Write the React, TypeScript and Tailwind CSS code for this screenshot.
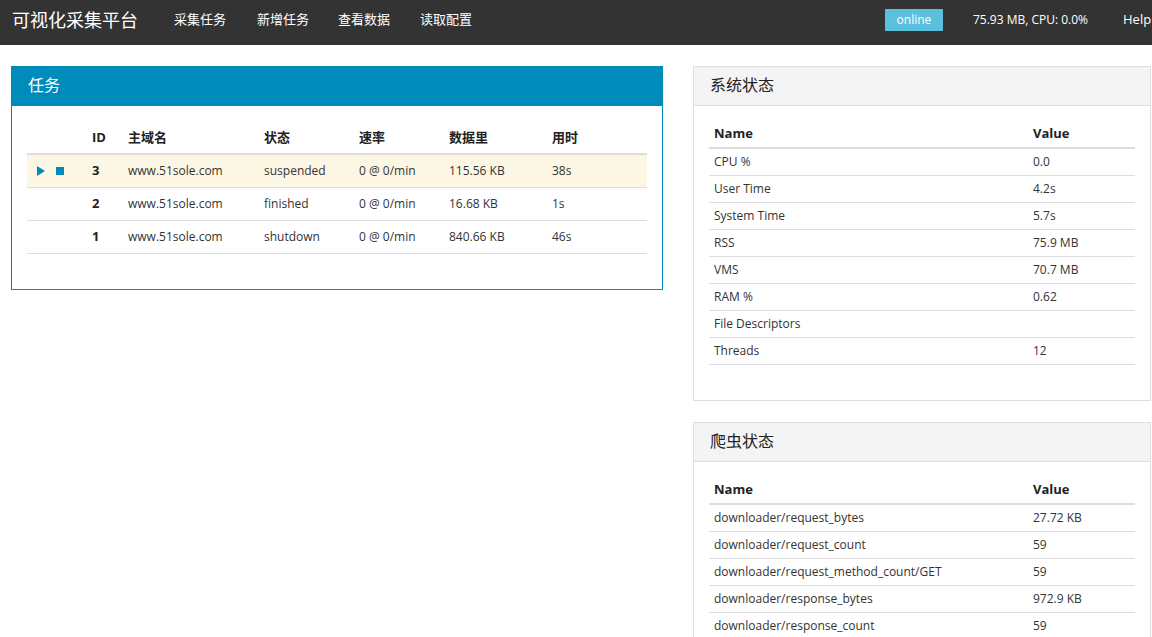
const FONT = "font-['Open_Sans','Noto_Sans_CJK_SC',sans-serif]";

const NAV = ["采集任务", "新增任务", "查看数据", "读取配置"];

const TASKS = [
  { id: 3, domain: "www.51sole.com", status: "suspended", speed: "0 @ 0/min", size: "115.56 KB", time: "38s", active: true },
  { id: 2, domain: "www.51sole.com", status: "finished", speed: "0 @ 0/min", size: "16.68 KB", time: "1s", active: false },
  { id: 1, domain: "www.51sole.com", status: "shutdown", speed: "0 @ 0/min", size: "840.66 KB", time: "46s", active: false },
];

const SYS = [
  ["CPU %", "0.0"],
  ["User Time", "4.2s"],
  ["System Time", "5.7s"],
  ["RSS", "75.9 MB"],
  ["VMS", "70.7 MB"],
  ["RAM %", "0.62"],
  ["File Descriptors", ""],
  ["Threads", "12"],
];

const SPIDER = [
  ["downloader/request_bytes", "27.72 KB"],
  ["downloader/request_count", "59"],
  ["downloader/request_method_count/GET", "59"],
  ["downloader/response_bytes", "972.9 KB"],
  ["downloader/response_count", "59"],
];

const taskCols = "grid grid-cols-[55px_36px_136px_95px_90px_103px_1fr]";

const StatTable = ({ rows }: { rows: string[][] }) => (
  <div className="text-[12px] text-[#333]">
    <div className="grid grid-cols-[319px_1fr] h-[28px] items-center border-b-2 border-[#ddd] font-bold text-[#222] text-[13px]">
      <div className="pl-[5px]">Name</div>
      <div className="pl-[5px]">Value</div>
    </div>
    {rows.map(([k, v]) => (
      <div key={k} className="grid grid-cols-[319px_1fr] h-[27px] items-center border-b border-[#ddd]">
        <div className="pl-[5px]">{k}</div>
        <div className="pl-[5px]">{v}</div>
      </div>
    ))}
  </div>
);

export default function App() {
  return (
    <div className={`${FONT} w-[1152px] h-[637px] overflow-hidden bg-white`}>
      {/* 顶部导航 */}
      <header className="h-[45px] bg-[#333] flex items-center pb-[5px] text-white">
        <div className="pl-[12px] text-[18px] w-[174px]">可视化采集平台</div>
        <nav className="flex text-[13px]">
          {NAV.map((n, i) => (
            <a key={n} className={i === 0 ? "w-[83px]" : i === 1 ? "w-[81px]" : i === 2 ? "w-[82px]" : ""}>{n}</a>
          ))}
        </nav>
        <div className="ml-auto flex items-center">
          <span className="bg-[#5bc0de] text-white text-[12px] w-[58px] h-[22px] flex items-center justify-center">online</span>
          <span className="ml-[30px] text-[12px]">75.93 MB, CPU: 0.0%</span>
          <span className="ml-[35px] text-[13px] w-[29px] whitespace-nowrap overflow-hidden">Help</span>
        </div>
      </header>

      <main className="flex pl-[11px] pt-[21px] gap-[30px] items-start">
        {/* 任务 */}
        <section className="w-[652px] border border-[#008cba]">
          <div className="h-[39px] bg-[#008cba] text-white text-[16px] flex items-center pb-[3px] pl-[16px]">任务</div>
          <div className="px-[15px] pt-[16px] pb-[35px] text-[12px] text-[#333]">
            <div className={`${taskCols} h-[33px] items-center border-b-2 border-[#ddd] font-bold text-[13px] text-[#222]`}>
              <div />
              <div className="pl-[10px]">ID</div>
              <div className="pl-[10px]">主域名</div>
              <div className="pl-[10px]">状态</div>
              <div className="pl-[10px]">速率</div>
              <div className="pl-[10px]">数据里</div>
              <div className="pl-[10px]">用时</div>
            </div>
            {TASKS.map((t) => (
              <div key={t.id} className={`${taskCols} h-[33px] items-center border-b border-[#ddd] ${t.active ? "bg-[#fcf7e4]" : ""}`}>
                <div className="pl-[10px] flex items-center gap-[11px]">
                  {t.active && (
                    <>
                      <svg width="8" height="10" viewBox="0 0 8 10"><path d="M0 0 L8 5 L0 10 Z" fill="#008cba" /></svg>
                      <span className="w-[8px] h-[8px] bg-[#008cba]" />
                    </>
                  )}
                </div>
                <div className="pl-[10px] font-bold text-[13px] text-[#222]">{t.id}</div>
                <div className="pl-[10px]">{t.domain}</div>
                <div className="pl-[10px]">{t.status}</div>
                <div className="pl-[10px]">{t.speed}</div>
                <div className="pl-[10px]">{t.size}</div>
                <div className="pl-[10px]">{t.time}</div>
              </div>
            ))}
          </div>
        </section>

        {/* 右侧状态 */}
        <div className="w-[458px] flex flex-col gap-[21px]">
          <section className="border border-[#ddd]">
            <div className="h-[39px] bg-[#f4f4f4] border-b border-[#ddd] text-[#222] text-[16px] flex items-center pb-[2px] pl-[16px]">系统状态</div>
            <div className="px-[15px] pt-[15px] pb-[35px]">
              <StatTable rows={SYS} />
            </div>
          </section>
          <section className="border border-[#ddd]">
            <div className="h-[39px] bg-[#f4f4f4] border-b border-[#ddd] text-[#222] text-[16px] flex items-center pb-[2px] pl-[16px]">爬虫状态</div>
            <div className="px-[15px] pt-[15px] pb-[35px]">
              <StatTable rows={SPIDER} />
            </div>
          </section>
        </div>
      </main>
    </div>
  );
}
